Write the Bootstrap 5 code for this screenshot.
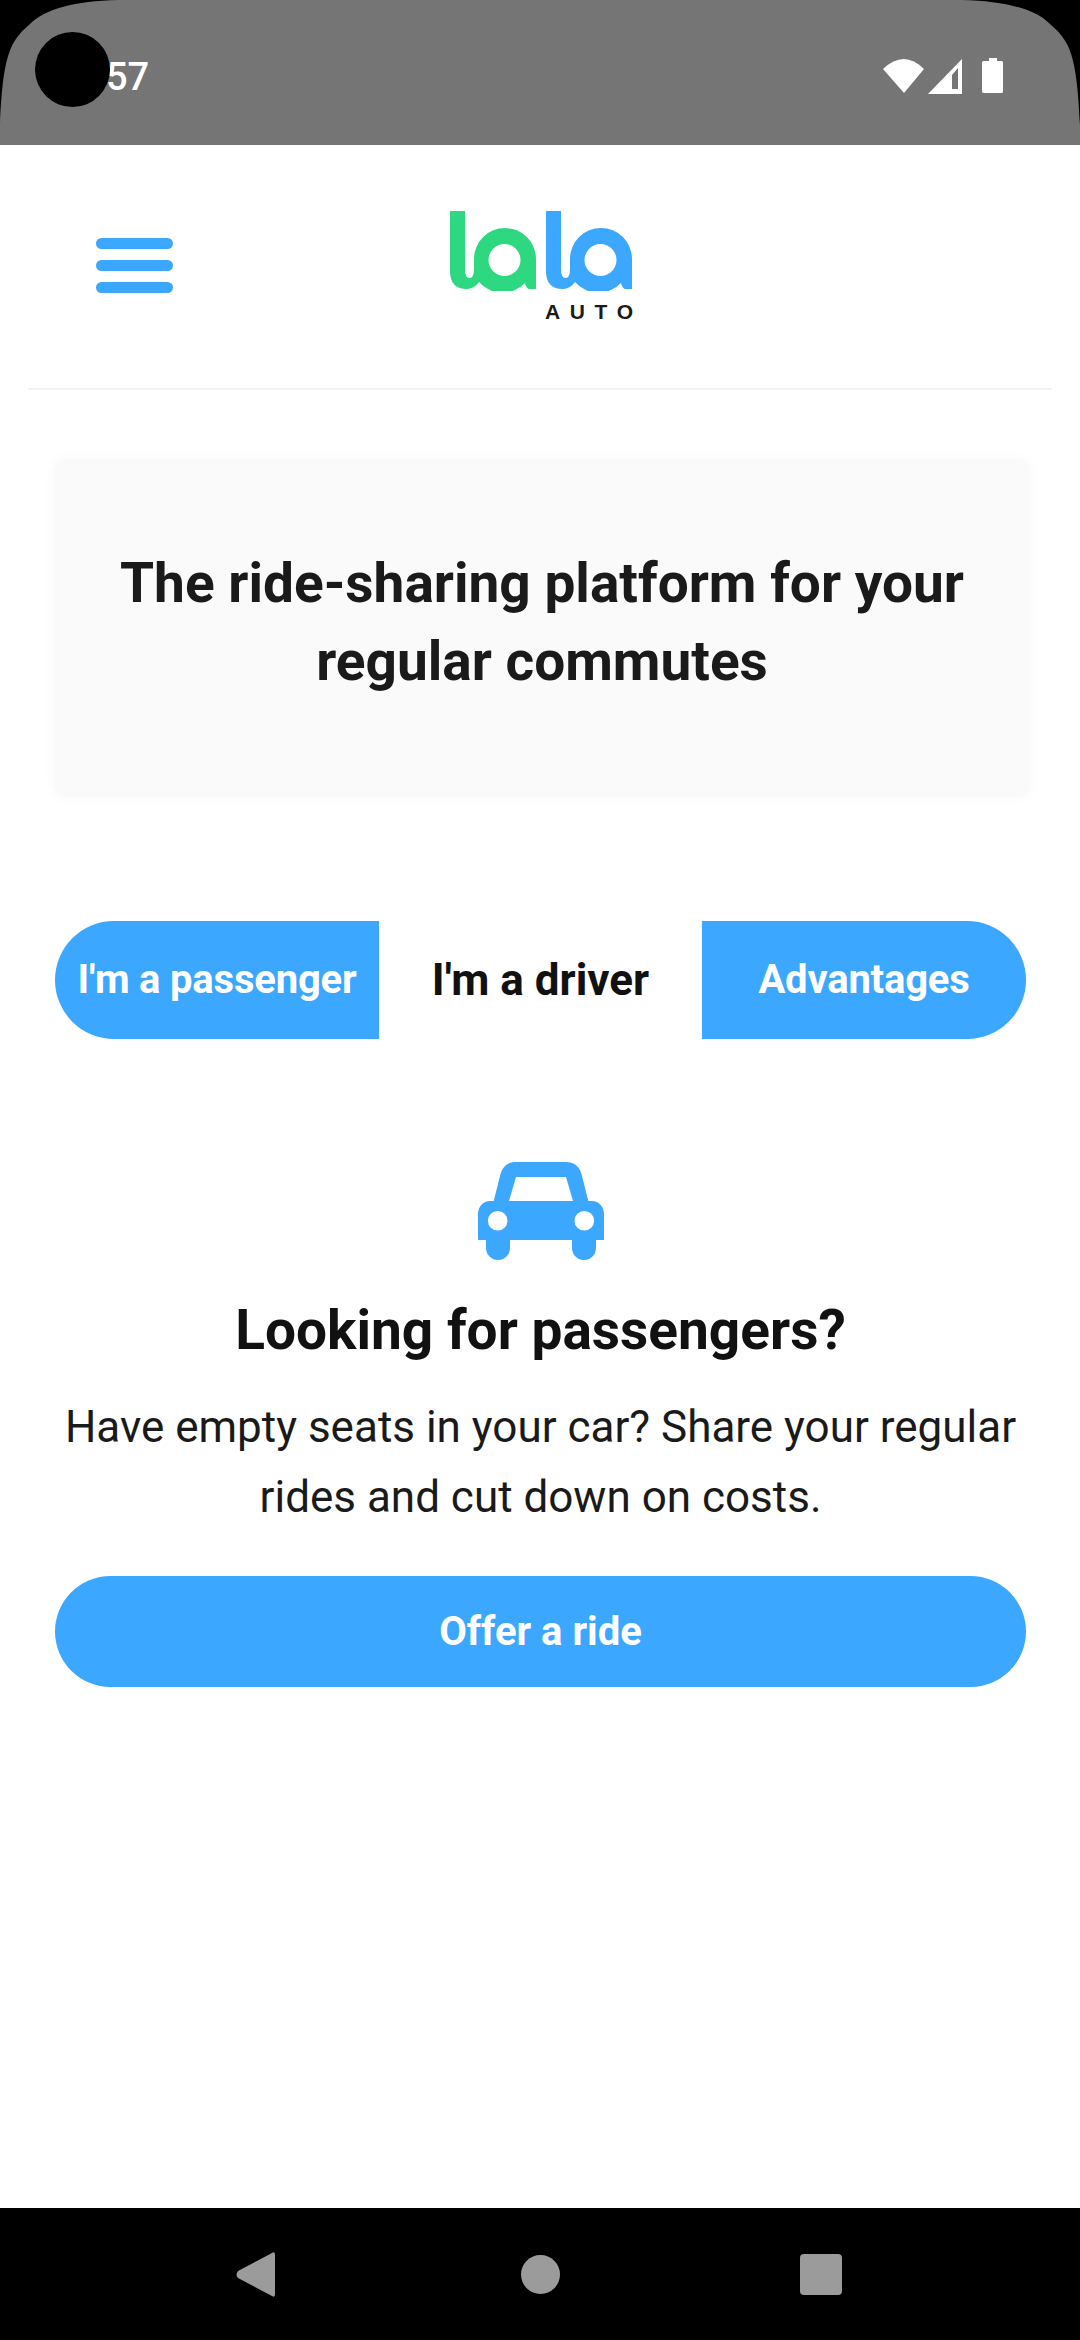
<!DOCTYPE html>
<html lang="en">
<head>
<meta charset="utf-8">
<title>Lala Auto</title>
<link href="https://cdn.jsdelivr.net/npm/bootstrap@5.3.0/dist/css/bootstrap.min.css" rel="stylesheet">
<style>
html,body{margin:0;height:2340px;background:#fff}
body{font-family:Roboto,"Liberation Sans",sans-serif;color:#1a1a1a;width:1080px}
.screen{height:2340px}
.status-bar{background:#757575;height:145px;position:relative;padding-left:106px;padding-right:77px;flex:0 0 145px}
.corner-mask{position:absolute;left:0;top:0}
.camera{position:absolute;left:35px;top:32px;width:75px;height:75px;border-radius:50%;background:#000}
.clock{color:#fff;font-size:38px;font-weight:500;line-height:1;margin-top:9px}
.status-icons{display:block;margin-top:6px}
.app-head{height:245px;flex:0 0 245px;margin:0 28px;padding:0 0 0 68px;border-bottom:2px solid #f3f3f3}
.burger{width:77px;gap:11px;margin-top:-2px;padding:0;border:0;background:none}
.burger span{display:block;height:11px;border-radius:6px;background:#3ca7ff}
.brand-box{margin-left:276px;margin-top:-6px;width:184px}
.brand-mark{display:block}
.auto-word{font-family:"Liberation Sans",Arial,sans-serif;font-weight:700;font-size:21px;line-height:15px;letter-spacing:9.6px;color:#1a1a1a;margin:13px -9.600px 0 0;text-align:right}
.hero-panel{margin:69px 50px 0 54px;height:338px;border:0;border-radius:12px;background:#fafafa;box-shadow:0 0 14px #f8f8f8;padding-top:85px}
.hero-title{font-size:55px;font-weight:700;line-height:78px;margin:0;text-align:center;color:#1a1a1a}
.switcher{margin:124px 54px 0 55px;height:118px;display:flex}
.switcher .btn{flex:0 0 auto;height:118px;border:0;border-radius:0;padding:0;font-size:40px;font-weight:700;background:#3ca7ff;color:#fff;line-height:1;letter-spacing:-.2px}
.switcher .btn.tab-first{width:324px;border-radius:59px 0 0 59px}
.switcher .btn.tab-mid{width:323px;background:#fff;color:#111;font-size:44px;letter-spacing:0}
.switcher .btn.tab-last{width:324px;border-radius:0 59px 59px 0}
.pitch{margin:123px 54px 0 55px;text-align:center}
.car-icon{display:block;margin:0 auto}
.pitch-title{font-size:55px;font-weight:700;line-height:60px;margin:40px 0 0;color:#111}
.pitch-text{font-size:44px;font-weight:400;line-height:70px;margin:32px -10px 0;color:#1a1a1a}
.btn.offer{display:block;width:971px;height:111px;border:0;border-radius:56px;background:#3ca7ff;color:#fff;font-size:40px;font-weight:700;margin-top:44px;padding:0}
.spacer-fill{flex:1 1 auto}
.nav-keys{height:132px;flex:0 0 132px;background:#000;position:relative}
</style>
</head>
<body>
<div class="screen d-flex flex-column">
  <div class="status-bar d-flex justify-content-between align-items-center">
    <div class="clock">57</div>
    <svg class="status-icons" width="120" height="36" viewBox="883 57 120 36" fill="#fff" aria-hidden="true">
      <path d="M883 68Q904 48 924 68L904 92Z"/>
      <path fill-rule="evenodd" d="M928 93L962 58V93ZM952 88H958V67L952 74Z"/>
      <path d="M989 57H997V60H1001.5Q1003 60 1003 61.5V90.5Q1003 92 1001.5 92H983.5Q982 92 982 90.5V61.5Q982 60 983.5 60H989Z"/>
    </svg>
    <svg class="corner-mask" width="1080" height="125" viewBox="0 0 1080 125" fill="#000" aria-hidden="true">
      <path d="M0 0H118C75 1 45 9 30 24C12 40 3 50 0 125Z"/>
      <path d="M1080 0H962C1005 1 1035 9 1050 24C1068 40 1077 50 1080 125Z"/>
    </svg>
    <div class="camera"></div>
  </div>

  <header class="app-head d-flex align-items-center">
    <button class="burger d-flex flex-column" type="button" aria-label="Menu"><span></span><span></span><span></span></button>
    <div class="brand-box">
      <svg class="brand-mark" width="184" height="82" viewBox="448 210 184 82" role="img" aria-label="lala">
        <path fill="#2ed880" fill-rule="evenodd" d="M449 212H464V270Q464 279 468.500 279Q473 279 473 270V260A31 31 0 0 1 535 260V290H528Q525 289 524 284A31 31 0 0 1 478 283Q473 290 466 290Q449 290 449 272ZM503.500 245A16 16 0 1 0 503.500 277A16 16 0 1 0 503.500 245Z"/>
        <path fill="#3ca7ff" fill-rule="evenodd" d="M545 212H560V270Q560 279 564.500 279Q569 279 569 270V260A31 31 0 0 1 631 260V290H624Q621 289 620 284A31 31 0 0 1 574 283Q569 290 562 290Q545 290 545 272ZM599.500 245A16 16 0 1 0 599.500 277A16 16 0 1 0 599.500 245Z"/>
      </svg>
      <div class="auto-word">AUTO</div>
    </div>
  </header>

  <section class="card hero-panel">
    <h1 class="hero-title">The ride-sharing platform for your<br>regular commutes</h1>
  </section>

  <div class="switcher btn-group" role="group">
    <button type="button" class="btn tab-first">I'm a passenger</button>
    <button type="button" class="btn tab-mid ms-0">I'm a driver</button>
    <button type="button" class="btn tab-last ms-0">Advantages</button>
  </div>

  <section class="pitch">
    <svg class="car-icon" width="126" height="98" viewBox="0 0 126 98" fill="#3ca7ff" aria-hidden="true">
      <path fill-rule="evenodd" d="M38 0H88C97 0 102 5 104 14L110.300 39H114C121 39 126 45 126 52V78H118V86A12 12 0 0 1 94 86V78H32V86A12 12 0 0 1 8 86V78H0V52C0 45 5 39 12 39H15.700L22 14C24 5 29 0 38 0ZM38 15L31 39H95L88 15ZM19.700 49A9.800 9.800 0 1 0 19.700 68.600A9.800 9.800 0 1 0 19.700 49ZM106.300 49A9.800 9.800 0 1 0 106.300 68.600A9.800 9.800 0 1 0 106.300 49Z"/>
    </svg>
    <h2 class="pitch-title">Looking for passengers?</h2>
    <p class="pitch-text">Have empty seats in your car? Share your regular rides and cut down on costs.</p>
    <button type="button" class="btn offer">Offer a ride</button>
  </section>

  <div class="spacer-fill"></div>

  <footer class="nav-keys d-flex">
    <svg width="1080" height="132" viewBox="0 2208 1080 132" fill="#9b9b9b" aria-hidden="true">
      <path d="M272 2253Q275 2251 275 2255V2294Q275 2298 272 2296L238 2278Q235 2275 238 2271Z"/>
      <circle cx="540.500" cy="2274.500" r="19.500"/>
      <rect x="800" y="2254" width="42" height="41" rx="4"/>
    </svg>
  </footer>
</div>
</body>
</html>
